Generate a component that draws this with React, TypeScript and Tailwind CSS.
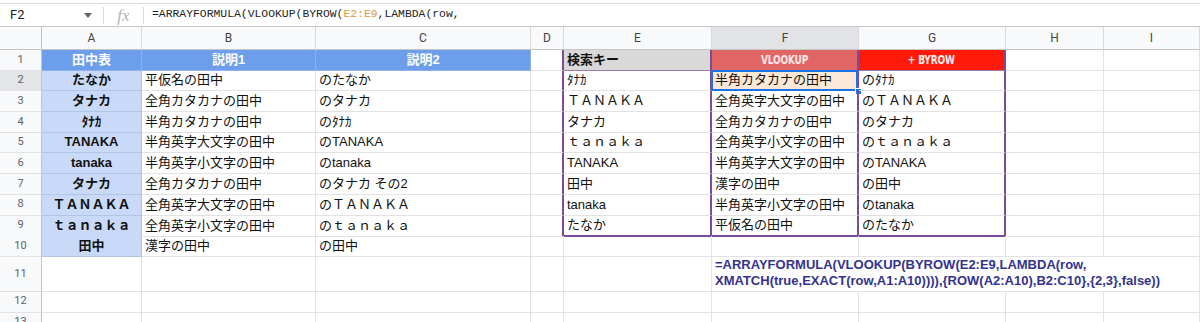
import React from "react";

// column widths: row header, A..I
const COLS =
  "grid grid-cols-[42px_100px_174px_215px_33px_148px_147px_147px_98px_96px]";

const CELL_FONT = "font-['Liberation_Sans','Noto_Sans_CJK_JP',sans-serif]";
const PURPLE_R = "border-r-2 border-r-[#7e4a9a]";
const PURPLE_B = "border-b-2 border-b-[#7e4a9a]";

type CellProps = {
  children?: React.ReactNode;
  r?: string;
  b?: string;
  className?: string;
};

function Cell({
  children,
  r = "border-r border-r-[#e2e2e2]",
  b = "border-b border-b-[#e2e2e2]",
  className = "",
}: CellProps) {
  return (
    <div
      className={`relative flex min-w-0 items-end whitespace-nowrap px-[3px] pb-[1px] text-[13px] leading-[18px] text-[#111] ${CELL_FONT} ${r} ${b} ${className}`}
    >
      {children}
    </div>
  );
}

function RowHead({ n, active }: { n: number; active?: boolean }) {
  return (
    <div
      className={`flex items-center justify-center border-r border-r-[#c4c4c4] border-b border-b-[#e2e2e2] font-['Roboto',sans-serif] text-[11px] text-[#5f6368] ${
        active ? "bg-[#e3e5e8]" : "bg-[#f8f9fa]"
      }`}
    >
      {n}
    </div>
  );
}

const DATA: string[][] = [
  ["たなか", "平仮名の田中", "のたなか", "ﾀﾅｶ", "半角カタカナの田中", "のﾀﾅｶ"],
  ["タナカ", "全角カタカナの田中", "のタナカ", "ＴＡＮＡＫＡ", "全角英字大文字の田中", "のＴＡＮＡＫＡ"],
  ["ﾀﾅｶ", "半角カタカナの田中", "のﾀﾅｶ", "タナカ", "全角カタカナの田中", "のタナカ"],
  ["TANAKA", "半角英字大文字の田中", "のTANAKA", "ｔａｎａｋａ", "全角英字小文字の田中", "のｔａｎａｋａ"],
  ["tanaka", "半角英字小文字の田中", "のtanaka", "TANAKA", "半角英字大文字の田中", "のTANAKA"],
  ["タナカ", "全角カタカナの田中", "のタナカ その2", "田中", "漢字の田中", "の田中"],
  ["ＴＡＮＡＫＡ", "全角英字大文字の田中", "のＴＡＮＡＫＡ", "tanaka", "半角英字小文字の田中", "のtanaka"],
  ["ｔａｎａｋａ", "全角英字小文字の田中", "のｔａｎａｋａ", "たなか", "平仮名の田中", "のたなか"],
  ["田中", "漢字の田中", "の田中", "", "", ""],
];

function DataRow({ n, row }: { n: number; row: string[] }) {
  const inBox = n <= 9;
  const boxB = n === 9 ? PURPLE_B : undefined;
  return (
    <div className={`${COLS} h-[20.7px]`}>
      <RowHead n={n} active={n === 2} />
      <Cell
        r="border-r border-r-[#b3c5e4]"
        b="border-b border-b-[#b3c5e4]"
        className="justify-center bg-[#c9daf8] font-bold"
      >
        {row[0]}
      </Cell>
      <Cell>{row[1]}</Cell>
      <Cell>{row[2]}</Cell>
      <Cell r={inBox ? PURPLE_R : undefined} />
      <Cell r={inBox ? PURPLE_R : undefined} b={boxB}>
        {row[3]}
      </Cell>
      <Cell
        r={inBox ? PURPLE_R : undefined}
        b={boxB}
        className={n === 2 ? "bg-[#fce8d6]" : ""}
      >
        {row[4]}
        {n === 2 && (
          <>
            <span className="pointer-events-none absolute inset-[-1px] border-2 border-[#1a73e8]" />
            <span className="absolute right-[-5px] bottom-[-5px] h-[7px] w-[7px] border border-white bg-[#1a73e8]" />
          </>
        )}
      </Cell>
      <Cell r={inBox ? PURPLE_R : undefined} b={boxB}>
        {row[5]}
      </Cell>
      <Cell />
      <Cell />
    </div>
  );
}

function EmptyRow({ n, h }: { n: number; h: string }) {
  return (
    <div className={`${COLS} ${h}`}>
      <RowHead n={n} />
      <Cell />
      <Cell />
      <Cell />
      <Cell />
      <Cell />
      <Cell />
      <Cell />
      <Cell />
      <Cell />
    </div>
  );
}

export default function App() {
  const letters = ["A", "B", "C", "D", "E", "F", "G", "H", "I"];
  return (
    <div className="h-[322px] w-[1200px] overflow-hidden bg-white">
      {/* formula bar */}
      <div className="h-[4px] border-b border-[#dcdcdc]" />
      <div className="flex h-[23px] items-center border-b border-[#c7c7c7]">
        <div className="flex w-[103px] items-center justify-between pl-[10px] pr-[11px] font-['Roboto',sans-serif] text-[13px] text-[#222]">
          <span>F2</span>
          <svg width="8" height="5" viewBox="0 0 8 5">
            <path d="M0 0h8L4 5z" fill="#666" />
          </svg>
        </div>
        <div className="h-[17px] w-px bg-[#dadada]" />
        <div className="flex w-[39px] justify-center font-['Liberation_Serif',serif] text-[17px] italic leading-none text-[#b5b5b5]">
          fx
        </div>
        <div className="h-[17px] w-px bg-[#dadada]" />
        <div className="pl-[8px] font-['Liberation_Mono',monospace] text-[11.4px] text-[#222]">
          =ARRAYFORMULA(VLOOKUP(BYROW(
          <span className="text-[#d99a38]">E2:E9</span>,LAMBDA(row,
        </div>
      </div>

      {/* column headers */}
      <div className={`${COLS} h-[23px]`}>
        <div className="border-r border-b border-[#c4c4c4] bg-[#f8f9fa]" />
        {letters.map((l) => (
          <div
            key={l}
            className={`flex items-center justify-center border-r border-r-[#dadada] border-b border-b-[#c4c4c4] font-['Roboto',sans-serif] text-[12px] text-[#444] ${
              l === "F" ? "bg-[#e1e3e6]" : "bg-[#f8f9fa]"
            }`}
          >
            {l}
          </div>
        ))}
      </div>

      {/* row 1 */}
      <div className={`${COLS} h-[20.7px]`}>
        <RowHead n={1} />
        <Cell
          r="border-r border-r-[#8fb2ee]"
          b="border-b border-b-[#8fb2ee]"
          className="justify-center bg-[#6d9eeb] font-bold text-white"
        >
          田中表
        </Cell>
        <Cell
          r="border-r border-r-[#8fb2ee]"
          b="border-b border-b-[#8fb2ee]"
          className="justify-center bg-[#6d9eeb] font-bold text-white"
        >
          説明1
        </Cell>
        <Cell
          r="border-r border-r-[#8fb2ee]"
          b="border-b border-b-[#8fb2ee]"
          className="justify-center bg-[#6d9eeb] font-bold text-white"
        >
          説明2
        </Cell>
        <Cell r={PURPLE_R} />
        <Cell r={PURPLE_R} b="border-b border-b-[#9c7aae]" className="bg-[#d9d9d9] font-bold">
          検索キー
        </Cell>
        <Cell r={PURPLE_R} b="border-b border-b-[#9c7aae]" className="items-center justify-center bg-[#e06666]">
          <span className="inline-block scale-x-[0.8] font-['DejaVu_Sans_Condensed','DejaVu_Sans',sans-serif] text-[12.5px] font-bold tracking-[-0.2px] text-[#fde8e8]">
            VLOOKUP
          </span>
        </Cell>
        <Cell r={PURPLE_R} b="border-b border-b-[#9c7aae]" className="items-center justify-center bg-[#ff1a0a]">
          <span className="inline-block scale-x-[0.8] font-['DejaVu_Sans_Condensed','DejaVu_Sans',sans-serif] text-[12.5px] font-bold tracking-[-0.2px] text-[#fff0ee]">
            + BYROW
          </span>
        </Cell>
        <Cell />
        <Cell />
      </div>

      {DATA.map((row, i) => (
        <DataRow key={i} n={i + 2} row={row} />
      ))}

      {/* row 11 with overflowing formula text */}
      <div className={`${COLS} h-[35px]`}>
        <RowHead n={11} />
        <Cell />
        <Cell />
        <Cell />
        <Cell />
        <Cell />
        <Cell r="border-r border-r-transparent" className="overflow-visible">
          <div className="relative z-10 pb-[1px] text-[13px] font-bold leading-[16px] text-[#33338f]">
            =ARRAYFORMULA(VLOOKUP(BYROW(E2:E9,LAMBDA(row,
            <br />
            XMATCH(true,EXACT(row,A1:A10)))),{"{"}ROW(A2:A10),B2:C10{"}"},{"{"}2,3{"}"},false))
          </div>
        </Cell>
        <Cell r="border-r border-r-transparent" />
        <Cell r="border-r border-r-transparent" />
        <Cell />
      </div>

      <EmptyRow n={12} h="h-[20.7px]" />
      <EmptyRow n={13} h="h-[20.7px]" />
    </div>
  );
}
